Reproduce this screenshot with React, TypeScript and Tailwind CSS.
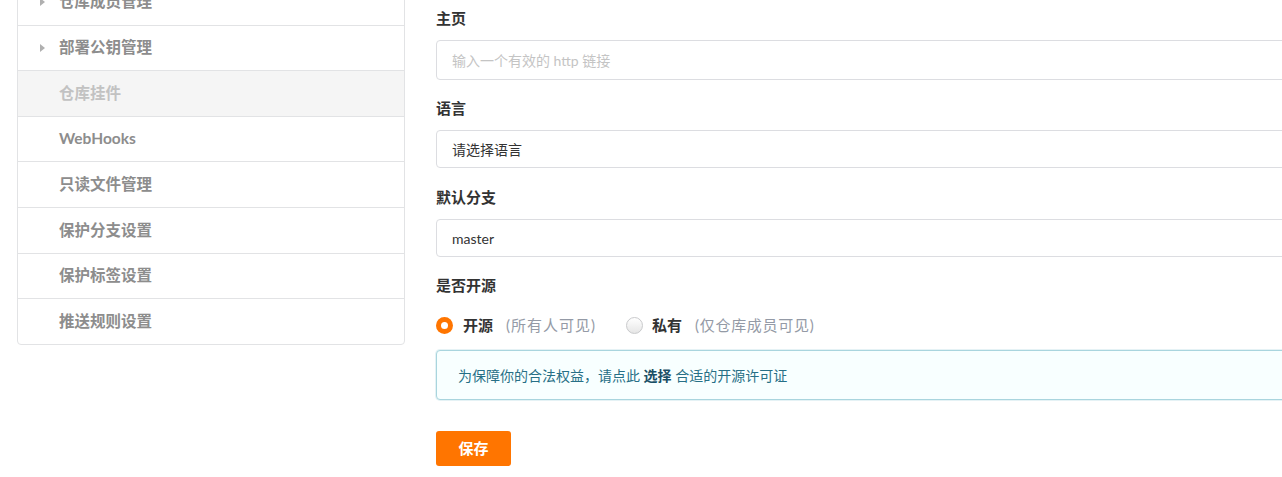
import React from 'react'

const font = { fontFamily: 'Lato, "Noto Sans CJK SC", sans-serif' }

interface MenuItem {
  label: string
  caret?: boolean
  active?: boolean
}

const menu: MenuItem[] = [
  { label: '仓库成员管理', caret: true },
  { label: '部署公钥管理', caret: true },
  { label: '仓库挂件', active: true },
  { label: 'WebHooks' },
  { label: '只读文件管理' },
  { label: '保护分支设置' },
  { label: '保护标签设置' },
  { label: '推送规则设置' },
]

function Caret() {
  return (
    <svg width="5" height="8" viewBox="0 0 5 8" className="absolute left-[22px] top-1/2 -translate-y-1/2">
      <path d="M0 0 L5 4 L0 8 Z" fill="#b0b0b0" />
    </svg>
  )
}

function Sidebar() {
  return (
    <div className="w-[388px] shrink-0 -mt-[22px] self-start border border-[#e2e3e5] rounded-b-[4px] bg-white">
      {menu.map((m, i) => (
        <div
          key={m.label}
          className={`relative h-[45.6px] flex items-center pl-[41px] text-[15.5px] font-bold ${i > 0 ? 'border-t border-[#e2e3e5]' : ''} ${m.active ? 'bg-[#f5f5f5] text-[#c2c2c2]' : 'text-[#8d8d8d]'}`}
        >
          {m.caret && <Caret />}
          {m.label}
        </div>
      ))}
    </div>
  )
}

function Label({ children, className = '' }: { children: React.ReactNode; className?: string }) {
  return <div className={`h-5 leading-5 text-[15px] font-bold text-[#333] ${className}`}>{children}</div>
}

function Field({ value, placeholder, h = 'h-[38px]' }: { value?: string; placeholder?: string; h?: string }) {
  return (
    <div className={`${h} w-[900px] border border-[#dcdde1] rounded-[4px] flex items-center px-[15px] text-[14px] ${value ? 'text-[#333]' : 'text-[#c4c4c4]'}`}>
      {value ?? placeholder}
    </div>
  )
}

function Radio({ checked }: { checked?: boolean }) {
  if (checked) {
    return (
      <span className="w-[17px] h-[17px] rounded-full bg-[#ff7500] flex items-center justify-center shrink-0">
        <span className="block w-[7px] h-[7px] rounded-full bg-white" />
      </span>
    )
  }
  return <span className="block w-[17px] h-[17px] rounded-full border border-[#c9cacc] bg-gradient-to-b from-white to-[#e6e6e6] shrink-0" />
}

export default function App() {
  return (
    <div style={font} className="w-[1282px] h-[477px] overflow-hidden bg-white flex gap-[31px] pl-[17px]">
      <Sidebar />
      <div className="flex flex-col pt-[8px]">
        <Label className="mb-[12px]">主页</Label>
        <Field placeholder="输入一个有效的 http 链接" h="h-[40px]" />
        <Label className="mt-[18px] mb-[12px]">语言</Label>
        <Field value="请选择语言" />
        <Label className="mt-[19px] mb-[12px]">默认分支</Label>
        <Field value="master" />
        <Label className="mt-[18px]">是否开源</Label>
        <div className="mt-[20px] h-5 flex items-center text-[15px]">
          <Radio checked />
          <span className="ml-[10px] font-bold text-[#333]">开源</span>
          <span className="ml-[13px] tracking-[1px] text-[#949aa6]">(所有人可见)</span>
          <span className="ml-[30px] flex">
            <Radio />
          </span>
          <span className="ml-[9px] font-bold text-[#333]">私有</span>
          <span className="ml-[13px] tracking-[0.7px] text-[#949aa6]">(仅仓库成员可见)</span>
        </div>
        <div className="mt-[15px] h-[50px] w-[900px] border border-[#a9d5de] rounded-[4px] bg-[#f8ffff] shadow-[0_0_0_1px_rgba(169,213,222,0.3)] flex items-center pl-[21px] text-[14px] text-[#276f86]">
          为保障你的合法权益，请点此&nbsp;<b className="font-bold text-[#1a4f66]">选择</b>&nbsp;合适的开源许可证
        </div>
        <button className="mt-[31px] w-[75px] h-[35px] rounded-[3px] bg-[#ff7500] text-white text-[15px] font-bold flex items-center justify-center">
          保存
        </button>
      </div>
    </div>
  )
}
